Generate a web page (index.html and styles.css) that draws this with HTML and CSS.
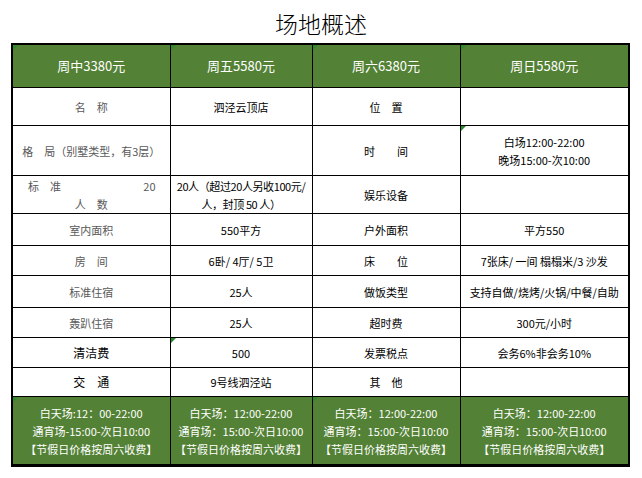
FILE: index.html
```html
<!DOCTYPE html>
<html lang="zh">
<head>
<meta charset="utf-8">
<link rel="stylesheet" href="styles.css">
</head>
<body>
<div class="title">场地概述</div>
<div class="wrap">
<table class="sheet">
<colgroup><col class="c1"><col class="c2"><col class="c3"><col class="c4"></colgroup>
<tr class="r-head">
<td class="mark">周中3380元</td><td class="mark">周五5580元</td><td class="mark">周六6380元</td><td class="mark">周日5580元</td>
</tr>
<tr class="r38">
<td class="gray">名　称</td><td>泗泾云顶店</td><td>位　置</td><td></td>
</tr>
<tr class="r50">
<td class="gray">格　局（别墅类型，有3层）</td><td></td><td>时　　间</td><td class="mark">白场12:00-22:00<br>晚场15:00-次10:00</td>
</tr>
<tr class="r38">
<td class="gray"><div class="split"><span>标　准</span><span>20</span></div><div>人　数</div></td><td class="tight">20人（超过20人另收100元/<br>人，封顶 50 人）</td><td>娱乐设备</td><td></td>
</tr>
<tr class="r32">
<td class="gray">室内面积</td><td>550平方</td><td>户外面积</td><td>平方550</td>
</tr>
<tr class="r30">
<td class="gray">房　间</td><td>6卧/ 4厅/ 5卫</td><td>床　　位</td><td>7张床/ 一间 榻榻米/3 沙发</td>
</tr>
<tr class="r32">
<td class="gray">标准住宿</td><td>25人</td><td>做饭类型</td><td>支持自做/烧烤/火锅/中餐/自助</td>
</tr>
<tr class="r30">
<td class="gray">轰趴住宿</td><td>25人</td><td>超时费</td><td>300元/小时</td>
</tr>
<tr class="r30">
<td class="big">清洁费</td><td class="mark">500</td><td>发票税点</td><td>会务6%非会务10%</td>
</tr>
<tr class="r29">
<td class="big">交　通</td><td>9号线泗泾站</td><td>其　他</td><td></td>
</tr>
<tr class="r-foot">
<td class="mark">白天场:12：00-22:00<br>通宵场-15:00-次日10:00<br>【节假日价格按周六收费】</td>
<td>白天场：12:00-22:00<br>通宵场：15:00-次日10:00<br>【节假日价格按周六收费】</td>
<td class="mark">白天场：12:00-22:00<br>通宵场：15:00-次日10:00<br>【节假日价格按周六收费】</td>
<td>白天场：12:00-22:00<br>通宵场：15:00-次日10:00<br>【节假日价格按周六收费】</td>
</tr>
</table>
</div>
</body>
</html>
```
FILE: styles.css
```css
html, body {
  margin: 0;
  padding: 0;
  background: #fff;
}
body {
  width: 642px;
  height: 478px;
  font-family: "Noto Sans CJK SC", "Noto Sans", sans-serif;
  color: #000;
}
.title {
  height: 43px;
  line-height: 46px;
  text-align: center;
  font-size: 23px;
  font-weight: 300;
}
.wrap {
  margin-left: 11px;
  width: 619px;
  box-sizing: border-box;
  border: 2px solid #000;
  border-bottom-width: 3px;
}
.sheet {
  width: 100%;
  border-collapse: collapse;
  table-layout: fixed;
  font-size: 11px;
}
.c1 { width: 157px; }
.c2 { width: 142px; }
.c3 { width: 148px; }
.c4 { width: 168px; }
.sheet td {
  border: 1px solid #000;
  text-align: center;
  vertical-align: middle;
  padding: 0 2px;
  line-height: 18px;
  position: relative;
  white-space: nowrap;
  overflow: hidden;
}
.sheet tr:first-child td { border-top: none; }
.sheet tr:last-child td { border-bottom: none; }
.sheet td:first-child { border-left: none; }
.sheet td:last-child { border-right: none; }
.r-head td {
  height: 42px;
  background: #538135;
  color: #fff;
  font-size: 13px;
}
.r38 td { height: 37px; }
.r50 td { height: 49px; }
.r32 td { height: 31px; }
.r30 td { height: 29px; }
.r29 td { height: 28px; }
.r-foot td {
  height: 67px;
  background: #538135;
  color: #fff;
}
.gray { color: #595959; }
.big { font-size: 12px; }
.tight {
  letter-spacing: -0.4px;
  padding: 0;
}
.split {
  display: flex;
  justify-content: space-between;
  padding: 0 12px 0 13px;
}
.mark::before {
  content: "";
  position: absolute;
  left: 0;
  top: 0;
  border-top: 5px solid #2b8a2b;
  border-right: 5px solid transparent;
}
```
